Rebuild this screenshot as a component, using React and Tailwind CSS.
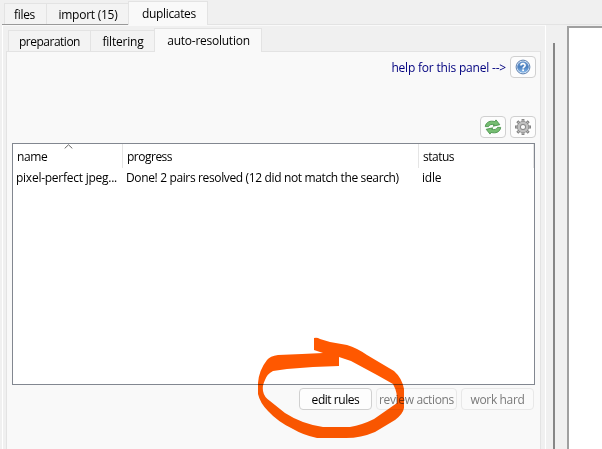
import React from "react";

function Tab({ className, children }) {
  return (
    <div className={"flex shrink-0 items-center justify-center whitespace-nowrap border-[#e3e3e3] " + className}>
      {children}
    </div>
  );
}

function Button({ className, children }) {
  return (
    <button className={"flex h-[22px] shrink-0 items-center justify-center whitespace-nowrap rounded-[4px] border " + className}>
      {children}
    </button>
  );
}

function HelpIcon() {
  return (
    <svg width="16" height="16" viewBox="0 0 16 16">
      <defs>
        <linearGradient id="blue" x1="0" y1="0" x2="0" y2="1">
          <stop offset="0" stopColor="#6f9bd0" />
          <stop offset="0.5" stopColor="#4a7fc0" />
          <stop offset="1" stopColor="#8bbcec" />
        </linearGradient>
      </defs>
      <circle cx="8" cy="8" r="6.9" fill="#e4edf7" stroke="#5b7fb0" strokeWidth="1" />
      <circle cx="8" cy="8" r="5.8" fill="url(#blue)" />
      <path d="M5.9 6.6C5.9 3.9 10.2 4 10.1 6.4C10.1 7.9 8.1 7.8 8.1 9.5" fill="none" stroke="#fff" strokeWidth="1.6" />
      <rect x="7.2" y="10.4" width="1.8" height="1.7" fill="#fff" />
    </svg>
  );
}

function RefreshIcon() {
  return (
    <svg width="18" height="16" viewBox="0 0 18 16">
      <g fill="#76bd72" stroke="#3f8b42" strokeWidth="0.8" strokeLinejoin="round">
        <path d="M1.3 7.6C1.8 3 6.3 1.2 10.8 2.6L12 0.9L15.8 5.7L9.2 7.2L10.2 5.7C7.4 5 5.5 5.6 4.5 7.6Z" />
        <path d="M16.7 8.4C16.2 13 11.7 14.8 7.2 13.4L6 15.1L2.2 10.3L8.8 8.8L7.8 10.3C10.6 11 12.5 10.4 13.5 8.4Z" />
      </g>
    </svg>
  );
}

function GearIcon() {
  return (
    <svg width="16" height="16" viewBox="0 0 16 16">
      <g stroke="#7c7c7c" strokeWidth="2.8">
        <path d="M8 0V16M0 8H16M2.3 2.3L13.7 13.7M13.7 2.3L2.3 13.7" />
      </g>
      <g stroke="#c2c2c2" strokeWidth="1.2">
        <path d="M8 0.8V15.2M0.8 8H15.2M2.9 2.9L13.1 13.1M13.1 2.9L2.9 13.1" />
      </g>
      <circle cx="8" cy="8" r="4.1" fill="#fcfcfc" stroke="#858585" strokeWidth="4" />
      <circle cx="8" cy="8" r="4.2" fill="none" stroke="#c0c0c0" strokeWidth="2.5" />
    </svg>
  );
}

function RulesTable() {
  return (
    <div className="ml-[5px] mt-[5px] h-[242px] w-[523px] border border-[#828790] bg-white">
      <div className="flex h-6">
        <div className="relative w-[110px] border-r border-[#e5e5e5] pl-1 pt-[5px]">
          name
          <svg className="absolute left-[51px] top-0" width="9" height="5" viewBox="0 0 9 5">
            <path d="M0.7 4.4L4.5 0.8L8.3 4.4" fill="none" stroke="#666" />
          </svg>
        </div>
        <div className="w-[296px] border-r border-[#e5e5e5] pl-1 pt-[5px] tracking-[-0.5px]">progress</div>
        <div className="w-[115px] border-r border-[#e5e5e5] pl-1 pt-[5px] tracking-[-0.5px]">status</div>
      </div>
      <div className="flex h-[19px] items-center whitespace-nowrap">
        <div className="w-[110px] pl-[3px] tracking-[-0.25px]">pixel-perfect jpeg...</div>
        <div className="w-[296px] pl-[3px] tracking-[-0.36px]">Done! 2 pairs resolved (12 did not match the search)</div>
        <div className="pl-[3px] tracking-[-0.2px]">idle</div>
      </div>
    </div>
  );
}

export default function App() {
  return (
    <div className="relative flex h-[449px] w-[602px] flex-col overflow-hidden bg-[#f0f0f0] font-['Open_Sans','Noto_Sans',sans-serif] text-[12px] leading-4 tracking-[-0.35px] text-black">
      <div className="flex h-[25px] items-end pl-[2px]">
        <div className="flex h-[22px] w-[126px] border-b border-[#999] pl-[2px]">
          <Tab className="w-[43px] border-x border-t bg-[#f3f3f3] pr-[2px] pt-px">files</Tab>
          <Tab className="w-[81px] border-t bg-[#f3f3f3] pl-px pt-px tracking-[-0.25px]">import (15)</Tab>
        </div>
        <Tab className="h-6 w-[80px] border-x border-t bg-[#f9f9f9] pl-[2px]">duplicates</Tab>
        <div className="h-px flex-1 bg-[#e3e3e3]" />
      </div>
      <div className="flex min-h-0 flex-1">
        <div className="ml-[2px] flex w-[544px] flex-col border-x border-x-white border-t border-t-[#f9f9f9] pl-[3px]">
          <div className="flex h-[26px] items-end">
            <div className="flex h-[22px] border-b border-[#e3e3e3] pl-[2px]">
              <Tab className="w-[83px] border-x border-t bg-[#f3f3f3] pt-px tracking-[-0.5px]">preparation</Tab>
              <Tab className="w-[63px] border-t bg-[#f3f3f3] pl-px pt-px tracking-[-0.2px]">filtering</Tab>
            </div>
            <Tab className="h-6 w-[108px] border-x border-t bg-[#f9f9f9] pl-px pt-px tracking-[-0.25px]">auto-resolution</Tab>
            <div className="mr-[4px] h-px flex-1 bg-[#e3e3e3]" />
          </div>
          <div className="mr-[4px] flex-1 border-x border-[#e3e3e3] bg-[#f9f9f9]">
            <div className="flex h-[26px] items-end justify-end gap-1 pr-[4px]">
              <span className="mb-[2px] tracking-[-0.2px] text-[#00007f]">help for this panel --&gt;</span>
              <Button className="w-[26px] border-[#d0d0d0] bg-[#fdfdfd]"><HelpIcon /></Button>
            </div>
            <div className="mt-[38px] flex justify-end gap-1 pr-[4px]">
              <Button className="w-[26px] border-[#d0d0d0] bg-[#fdfdfd]"><RefreshIcon /></Button>
              <Button className="w-[26px] border-[#d0d0d0] bg-[#fdfdfd]"><GearIcon /></Button>
            </div>
            <RulesTable />
            <div className="mt-[3px] flex justify-end gap-1 pr-[6px]">
              <Button className="w-[73px] border-[#d0d0d0] bg-[#fdfdfd] pt-px tracking-[-0.45px]">edit rules</Button>
              <Button className="w-[81px] border-[#e8e8e8] bg-[#fafafa] pt-px text-[#7a7a7a]">review actions</Button>
              <Button className="w-[73px] border-[#e8e8e8] bg-[#fafafa] pt-px text-[#7a7a7a]">work hard</Button>
            </div>
          </div>
        </div>
        <div className="ml-[7px] mt-[18px] w-[2px] bg-[#868686]" />
        <div className="ml-[12px] mt-px flex-1 border-l-2 border-t-2 border-[#a0a0a0] bg-white" />
      </div>
      <svg className="pointer-events-none absolute left-0 top-0 mix-blend-multiply" width="602" height="449" viewBox="0 0 602 449">
        <path
          fill="#ff5800"
          d="M314 338Q317 337 320 339L330 342L347 345Q357 348 367 355L394 371Q402 378 404 389L404 408Q403 414 395 420L375 432Q361 438 346 438L317 438Q303 435 293 429Q278 422 268 411Q260 403 258 394L258 383Q259 370 267 360Q270 356 278 355L302 354L323 353L314 350ZM339 357L339 366L313 367L287 369L273 371Q267 374 265 380Q262 386 263 391Q264 397 270 401L285 413Q302 424 323 427L350 427Q362 425 374 419L397 403Q398 393 393 384L377 375L351 361Z"
        />
      </svg>
    </div>
  );
}
